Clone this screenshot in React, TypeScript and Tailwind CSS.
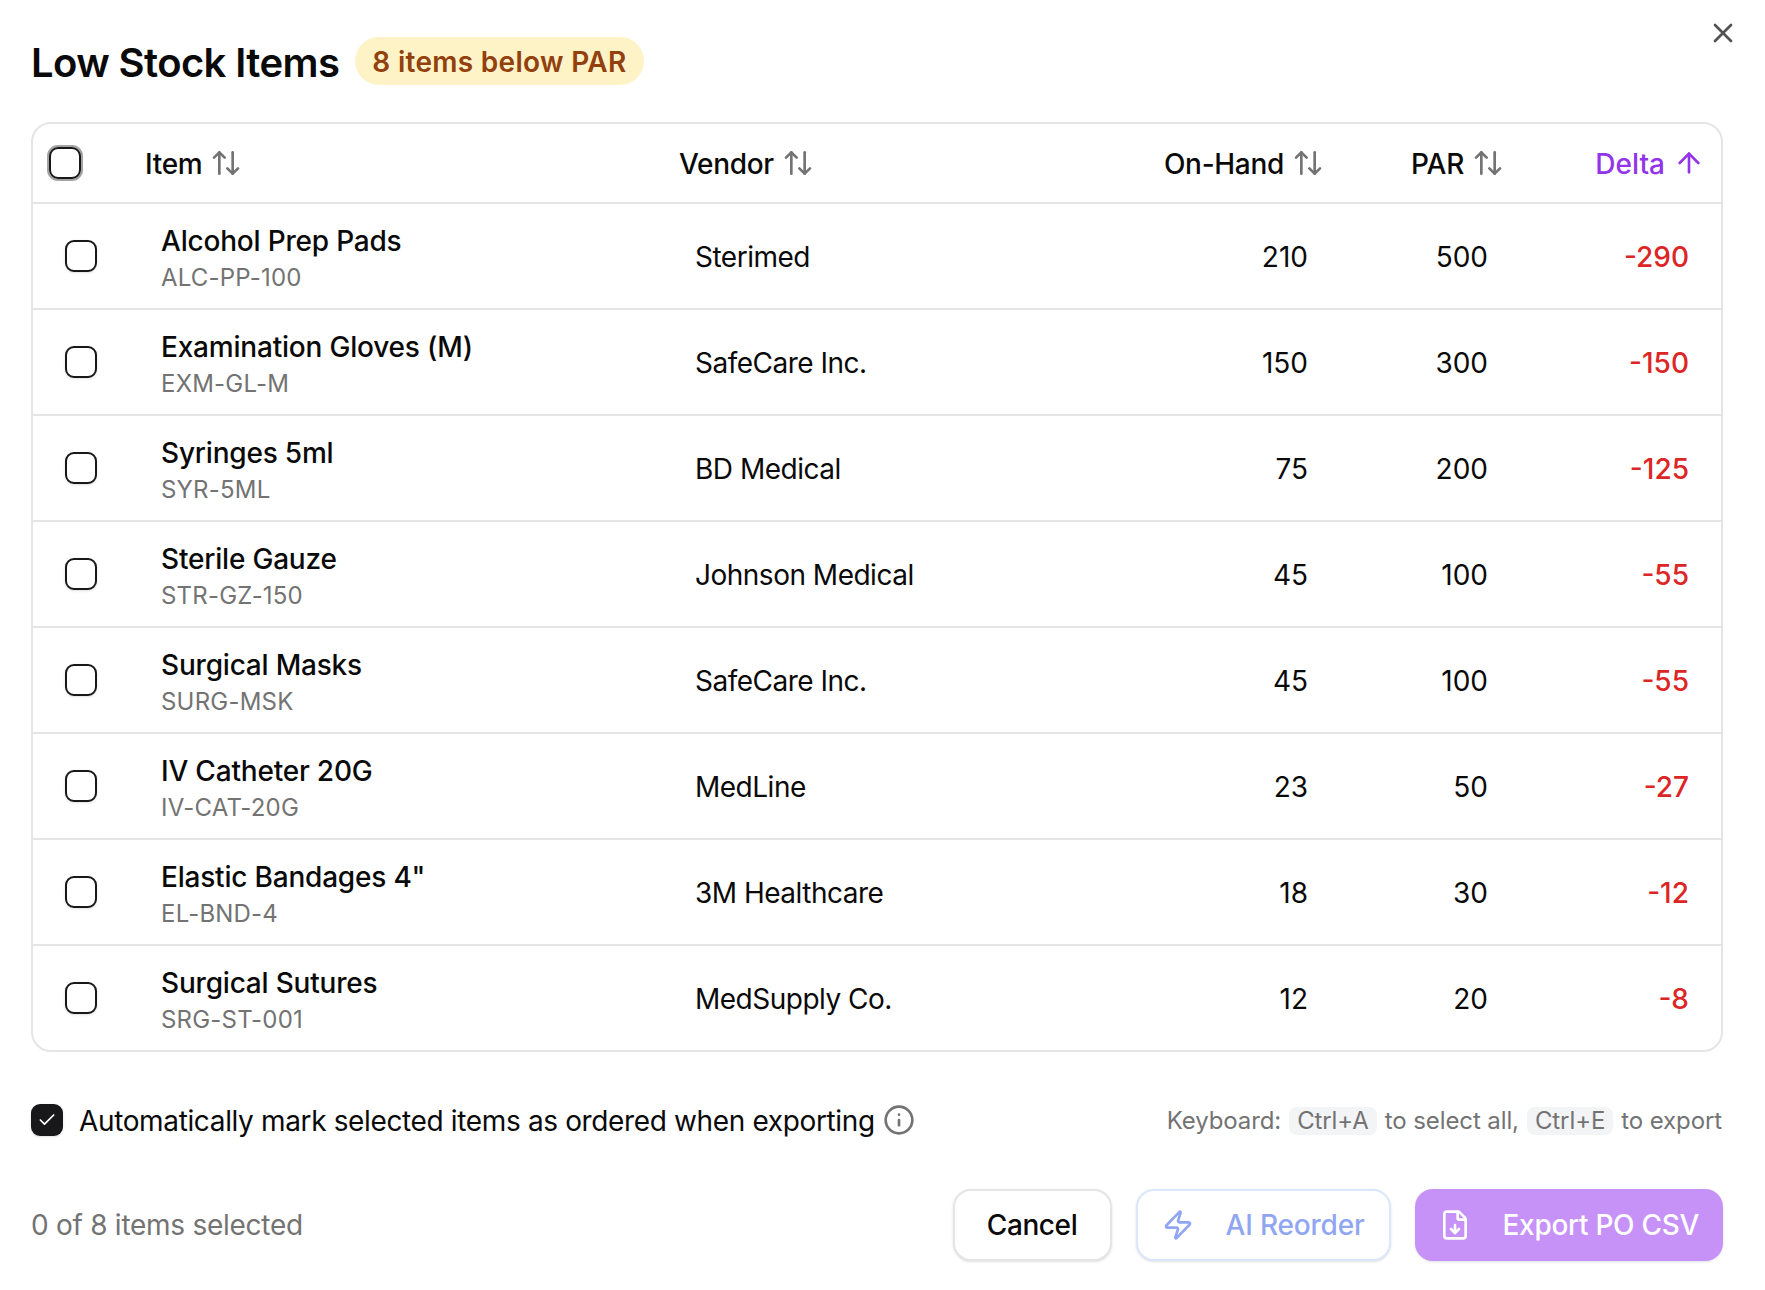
import React from 'react';
import { ArrowUp, ArrowUpDown, Check, FileDown, Info, X, Zap } from 'lucide-react';

const items = [
    { name: 'Alcohol Prep Pads', sku: 'ALC-PP-100', vendor: 'Sterimed', onHand: 210, par: 500 },
    { name: 'Examination Gloves (M)', sku: 'EXM-GL-M', vendor: 'SafeCare Inc.', onHand: 150, par: 300 },
    { name: 'Syringes 5ml', sku: 'SYR-5ML', vendor: 'BD Medical', onHand: 75, par: 200 },
    { name: 'Sterile Gauze', sku: 'STR-GZ-150', vendor: 'Johnson Medical', onHand: 45, par: 100 },
    { name: 'Surgical Masks', sku: 'SURG-MSK', vendor: 'SafeCare Inc.', onHand: 45, par: 100 },
    { name: 'IV Catheter 20G', sku: 'IV-CAT-20G', vendor: 'MedLine', onHand: 23, par: 50 },
    { name: 'Elastic Bandages 4"', sku: 'EL-BND-4', vendor: '3M Healthcare', onHand: 18, par: 30 },
    { name: 'Surgical Sutures', sku: 'SRG-ST-001', vendor: 'MedSupply Co.', onHand: 12, par: 20 },
];

const SortHeader: React.FC<{ label: string; right?: boolean }> = ({ label, right }) => (
    <div className={`flex items-center gap-2 px-4 ${right ? 'justify-end' : ''}`}>
        <span className="pt-[2px] tracking-[-0.3px]">{label}</span>
        <ArrowUpDown size={32} strokeWidth={2} className="text-[#737373]" />
    </div>
);

const App: React.FC = () => {
    return (
        <div className="relative min-h-[1290px] w-[1765px] overflow-hidden bg-white pl-[31px] pr-[42px] pt-[37px] font-['Inter',sans-serif] text-[28px] leading-10 text-[#0a0a0a]">
            <button className="absolute right-[26px] top-[17px] text-[#525252]">
                <X size={32} strokeWidth={2} />
            </button>

            <div className="flex h-12 items-center gap-4">
                <h2 className="pt-[3px] text-[40px] font-semibold leading-10 tracking-[-0.6px]">Low Stock Items</h2>
                <span className="flex h-12 items-center rounded-full bg-[#fef3c7] px-[17px] pt-[2px] text-[28px] font-semibold leading-10 tracking-[0.3px] text-[#92400e]">8 items below PAR</span>
            </div>

            <div className="mt-[37px] overflow-hidden rounded-[20px] border-2 border-[#e5e5e5]">
                <table className="w-full table-fixed border-separate border-spacing-0">
                    <colgroup>
                        <col className="w-[96px]" />
                        <col className="w-[534px]" />
                        <col className="w-[440px]" />
                        <col className="w-[237px]" />
                        <col className="w-[180px]" />
                        <col className="w-[201px]" />
                    </colgroup>
                    <thead>
                        <tr>
                            <th className="h-20 border-b-2 border-[#e5e5e5] pl-4 text-left">
                                <div className="h-8 w-8 rounded-[9px] border-2 border-[#18181b] ring-2 ring-[#a3a3a3]" />
                            </th>
                            <th className="h-20 border-b-2 border-[#e5e5e5] text-left font-[450]"><SortHeader label="Item" /></th>
                            <th className="h-20 border-b-2 border-[#e5e5e5] text-left font-[450]"><SortHeader label="Vendor" /></th>
                            <th className="h-20 border-b-2 border-[#e5e5e5] font-[450]"><SortHeader label="On-Hand" right /></th>
                            <th className="h-20 border-b-2 border-[#e5e5e5] font-[450]"><SortHeader label="PAR" right /></th>
                            <th className="h-20 border-b-2 border-[#e5e5e5] font-[450]">
                                <div className="flex items-center justify-end gap-2 px-4 text-[#9333ea]">
                                    <span className="pt-[2px]">Delta</span>
                                    <ArrowUp size={32} strokeWidth={2} />
                                </div>
                            </th>
                        </tr>
                    </thead>
                    <tbody>
                        {items.map((item, i) => {
                            const cell = i < items.length - 1 ? 'h-[106px] border-b-2 border-[#e5e5e5]' : 'h-[104px]';
                            return (
                                <tr key={item.sku}>
                                    <td className={`${cell} pl-8`}>
                                        <div className="h-8 w-8 rounded-[9px] border-2 border-[#18181b] bg-white shadow-sm" />
                                    </td>
                                    <td className={`${cell} px-8 pt-[2px]`}>
                                        <p className="pt-[1px] font-[450] leading-10 tracking-[-0.2px]">{item.name}</p>
                                        <p className="pt-[1px] text-2xl leading-8 tracking-[0.2px] text-[#737373]">{item.sku}</p>
                                    </td>
                                    <td className={`${cell} px-8 pt-[2px] tracking-[-0.5px]`}>{item.vendor}</td>
                                    <td className={`${cell} px-8 pt-[2px] text-right`}>{item.onHand}</td>
                                    <td className={`${cell} px-8 pt-[2px] text-right`}>{item.par}</td>
                                    <td className={`${cell} px-8 pt-[2px] text-right font-medium text-[#dc2626]`}>{item.onHand - item.par}</td>
                                </tr>
                            );
                        })}
                    </tbody>
                </table>
            </div>

            <div className="mt-[52px] flex h-8 items-center justify-between">
                <div className="flex items-center">
                    <div className="flex h-8 w-8 items-center justify-center rounded-[9px] bg-[#18181b] text-white shadow-sm">
                        <Check size={20} strokeWidth={2} />
                    </div>
                    <span className="ml-4 pt-[2px] tracking-[-0.36px]">Automatically mark selected items as ordered when exporting</span>
                    <Info size={32} strokeWidth={2} className="ml-2 text-[#737373]" />
                </div>
                <div className="mr-[1px] flex items-center gap-2 pt-[2px] text-2xl tracking-[-0.1px] text-[#737373]">
                    <span>Keyboard:</span>
                    <kbd className="flex h-7 items-center rounded-lg bg-[#f3f4f6] px-2 font-['Inter',sans-serif]">Ctrl+A</kbd>
                    <span>to select all,</span>
                    <kbd className="flex h-7 items-center rounded-lg bg-[#f3f4f6] px-2 font-['Inter',sans-serif]">Ctrl+E</kbd>
                    <span>to export</span>
                </div>
            </div>

            <div className="mt-[53px] flex h-[72px] items-center justify-between">
                <span className="tracking-[-0.27px] text-[#737373]">0 of 8 items selected</span>
                <div className="flex items-center gap-6">
                    <button className="h-[72px] w-[159px] rounded-[18px] border-2 border-[#e5e5e5] bg-white font-medium tracking-[-0.4px] shadow-sm">Cancel</button>
                    <button className="flex h-[72px] items-center gap-8 rounded-[18px] border-2 border-[#dbe8fc] bg-white px-6 font-medium tracking-[-0.2px] text-[#91a6f2] shadow-sm">
                        <Zap size={32} strokeWidth={2} />
                        AI Reorder
                    </button>
                    <button className="flex h-[72px] items-center gap-8 rounded-[18px] bg-[#c792f8] px-6 font-medium tracking-[-0.3px] text-white shadow-sm">
                        <FileDown size={32} strokeWidth={2} />
                        Export PO CSV
                    </button>
                </div>
            </div>
        </div>
    );
};

export default App;
